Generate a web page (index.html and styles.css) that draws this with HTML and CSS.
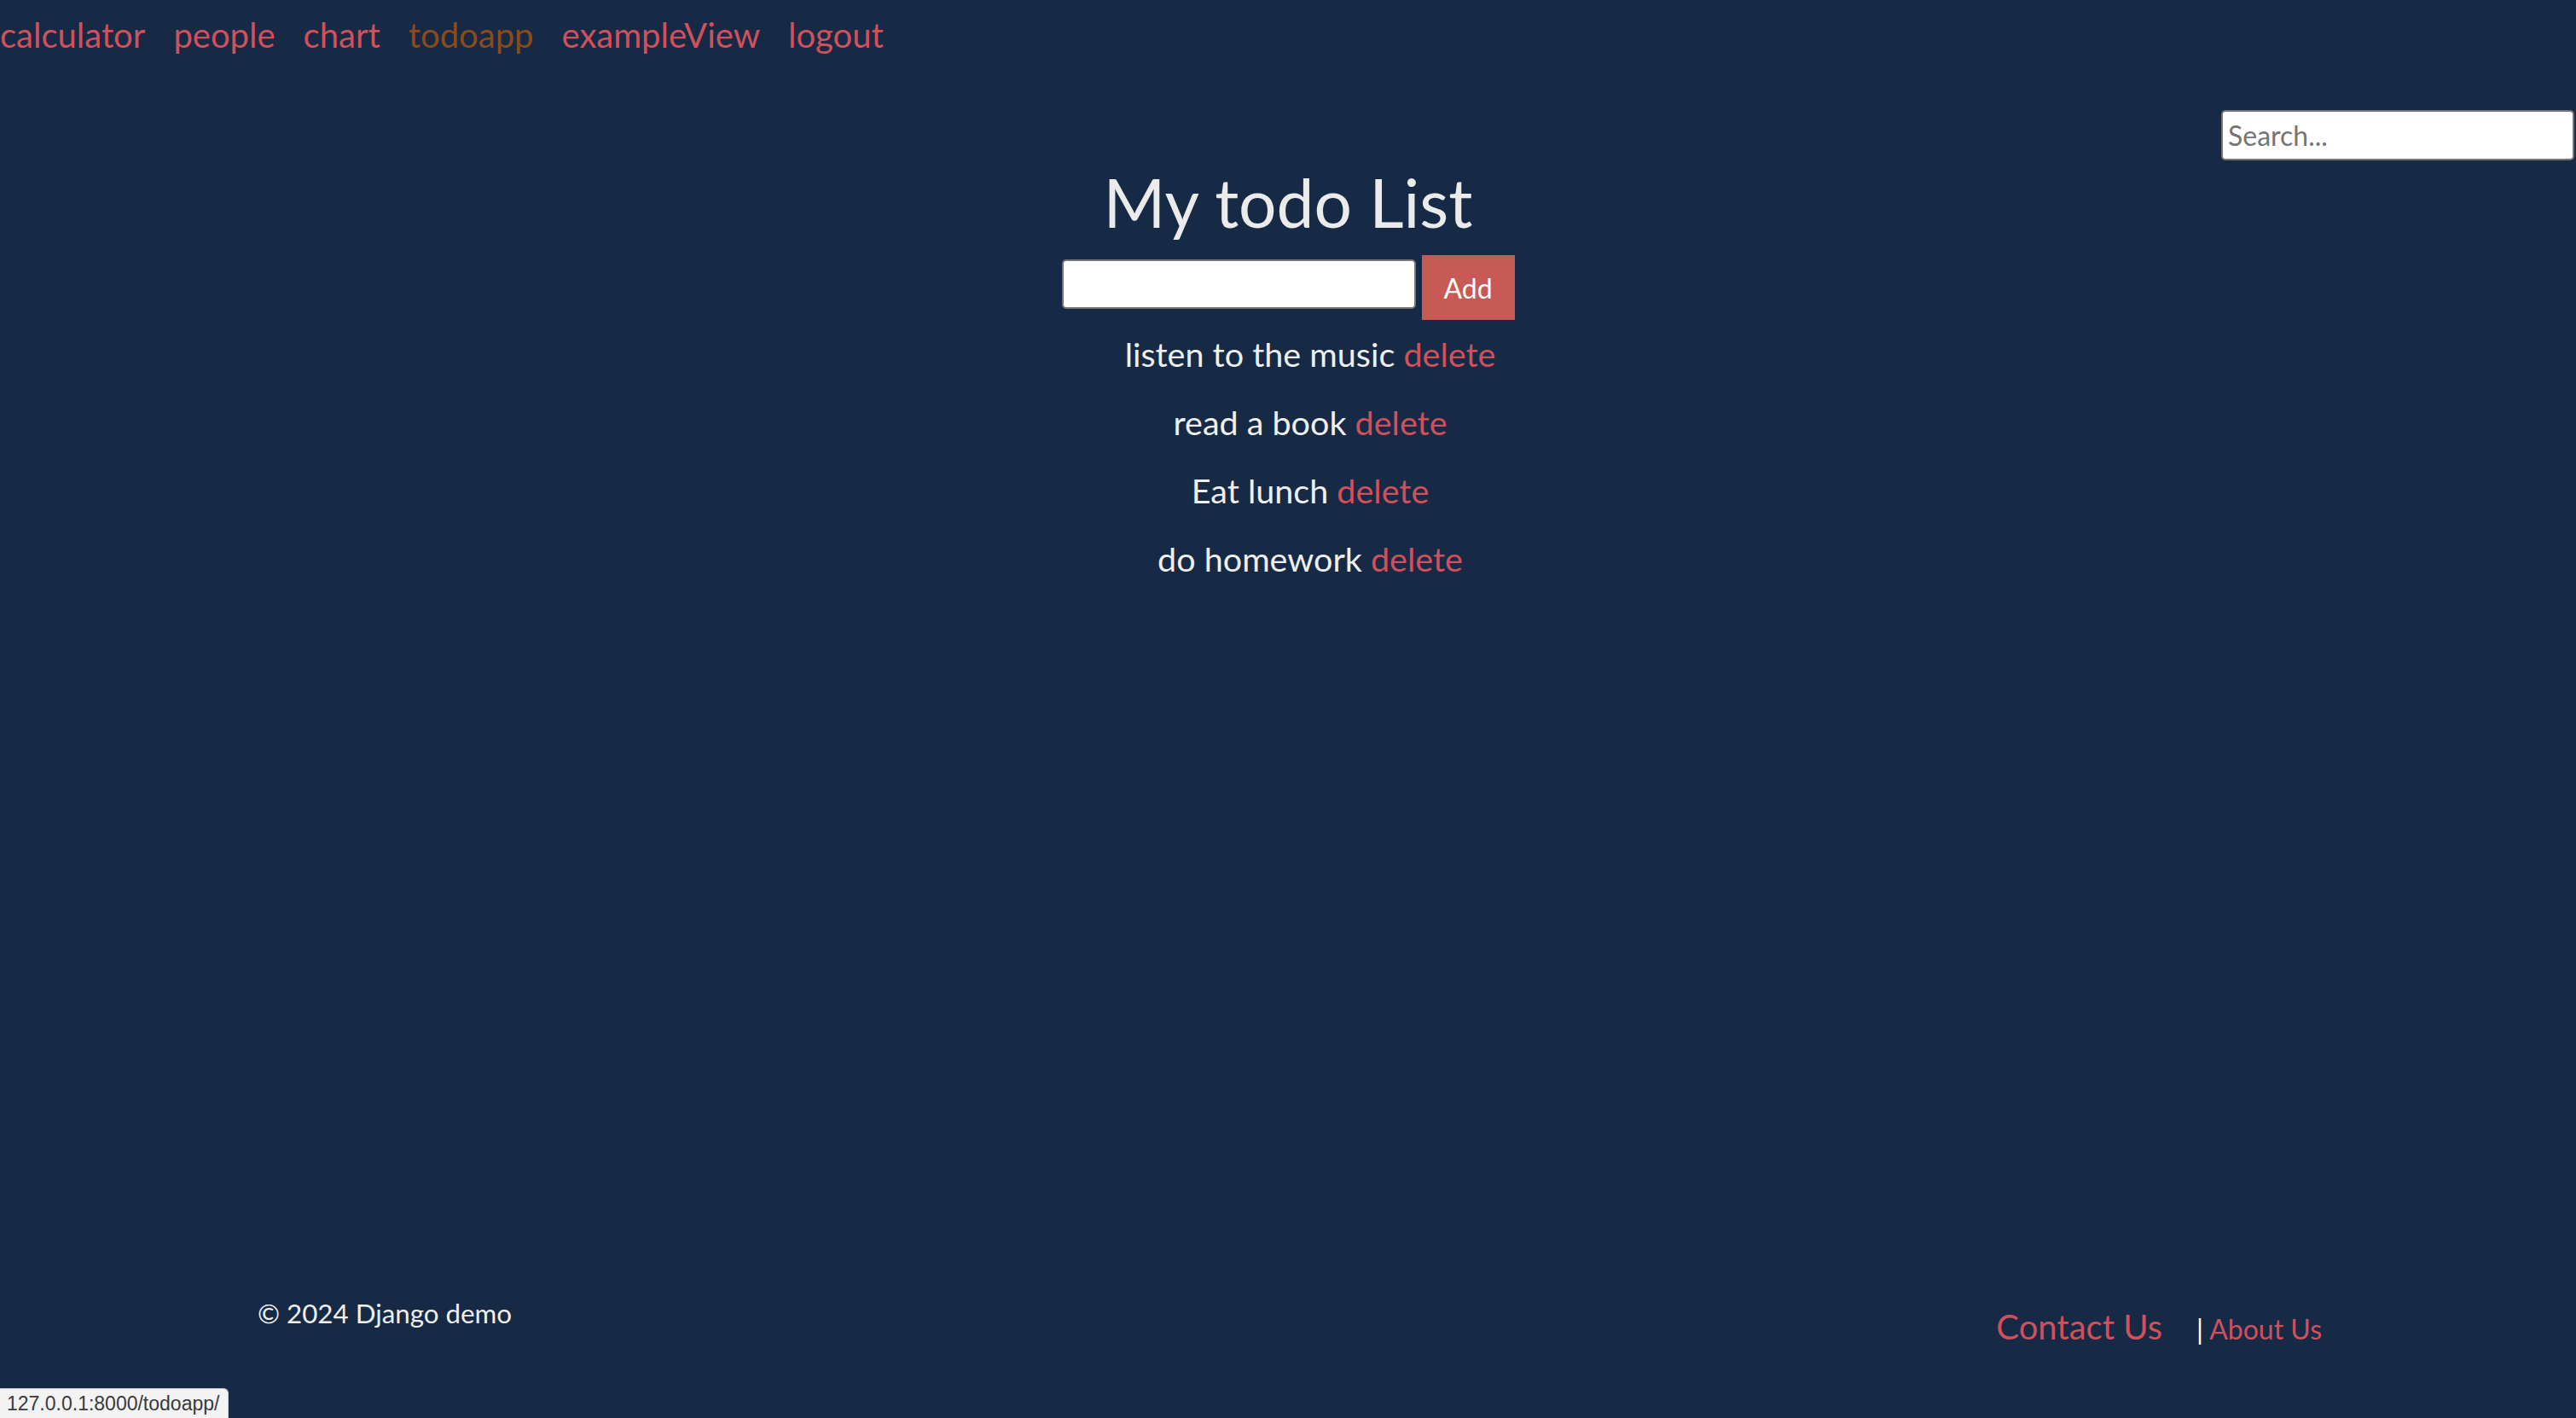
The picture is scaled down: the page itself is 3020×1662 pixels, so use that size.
FILE: index.html
```html
<!DOCTYPE html>
<html lang="en">
<head>
<meta charset="utf-8">
<title>My todo List</title>
<link rel="stylesheet" href="styles.css">
</head>
<body>
<nav class="topnav">
  <a class="nav-link" href="#">calculator</a>
  <a class="nav-link" href="#">people</a>
  <a class="nav-link" href="#">chart</a>
  <a class="nav-link active" href="#">todoapp</a>
  <a class="nav-link" href="#">exampleView</a>
  <a class="nav-link" href="#">logout</a>
</nav>
<div class="search-row">
  <input class="search" type="text" placeholder="Search...">
</div>
<main class="content">
  <h1 class="title">My todo List</h1>
  <form class="add-form">
    <input class="todo-input" type="text">
    <button class="add-btn" type="button">Add</button>
  </form>
  <ul class="todo-list">
    <li class="todo-item">listen to the music <a class="del" href="#">delete</a></li>
    <li class="todo-item">read a book <a class="del" href="#">delete</a></li>
    <li class="todo-item">Eat lunch <a class="del" href="#">delete</a></li>
    <li class="todo-item">do homework <a class="del" href="#">delete</a></li>
  </ul>
</main>
<footer class="footer">
  <p class="copy">© 2024 Django demo</p>
  <div class="footer-links">
    <a class="contact" href="#">Contact Us</a><span class="sep">| <a class="about" href="#">About Us</a></span>
  </div>
</footer>
<div class="status">127.0.0.1:8000/todoapp/</div>
</body>
</html>
```

FILE: styles.css
```css
html, body {
  margin: 0;
  padding: 0;
}
body {
  background: #162a45;
  font-family: "Lato", "Open Sans", sans-serif;
  color: #ececec;
  min-height: 100vh;
  display: flex;
  flex-direction: column;
  box-sizing: border-box;
}
a {
  text-decoration: none;
}
.topnav {
  display: flex;
  gap: 33px;
  padding-top: 17px;
  font-size: 40px;
  line-height: 48px;
}
.nav-link {
  color: #d0505c;
}
.nav-link.active {
  color: #8b4a1c;
}
.search-row {
  display: flex;
  justify-content: flex-end;
  padding-right: 2px;
  margin-top: 64px;
}
.search {
  box-sizing: border-box;
  width: 414px;
  height: 59px;
  border: 2px solid #767676;
  border-radius: 5px;
  padding: 0 6px;
  font-family: "Lato", sans-serif;
  font-size: 32px;
  background: #fff;
  outline: none;
}
.search::placeholder {
  color: #757575;
}
.content {
  display: flex;
  flex-direction: column;
  align-items: center;
}
.title {
  margin: 0;
  font-size: 78.5px;
  font-weight: 400;
  line-height: 98px;
  color: #ebebeb;
}
.add-form {
  display: flex;
  align-items: flex-start;
  gap: 7px;
  margin-top: 13px;
}
.todo-input {
  box-sizing: border-box;
  width: 415px;
  height: 58px;
  margin-top: 5px;
  border: 2px solid #767676;
  border-radius: 5px;
  background: #fff;
  font-size: 32px;
  outline: none;
}
.add-btn {
  box-sizing: border-box;
  width: 109px;
  height: 76px;
  border: none;
  background: #c85a55;
  color: #fff;
  font-family: "Lato", sans-serif;
  font-size: 32px;
  padding: 0;
}
.todo-list {
  list-style: none;
  margin: 16px 0 0;
  padding: 0 0 0 52px;
  text-align: center;
  display: flex;
  flex-direction: column;
  gap: 32px;
}
.todo-item {
  font-size: 39.5px;
  line-height: 48px;
  color: #efefef;
}
.del {
  color: #d0505c;
}
.footer {
  margin-top: auto;
  padding: 0 298px 79px 302px;
  display: flex;
  justify-content: space-between;
  align-items: flex-start;
}
.copy {
  margin: 0;
  font-size: 31.3px;
  line-height: 38px;
  color: #efefef;
}
.footer-links {
  padding-top: 10px;
  font-size: 40px;
  line-height: 50px;
}
.contact {
  color: #d0505c;
}
.sep {
  margin-left: 40px;
  font-size: 32px;
  color: #ffffff;
}
.about {
  color: #d0505c;
}
.status {
  position: absolute;
  left: 0;
  bottom: 0;
  box-sizing: border-box;
  width: 268px;
  height: 35px;
  padding: 4px 0 0 8px;
  background: #f3f3f3;
  border: 1px solid #c6c6c6;
  border-left: none;
  border-bottom: none;
  border-top-right-radius: 6px;
  font-family: "Liberation Sans", Arial, sans-serif;
  font-size: 23px;
  line-height: 26px;
  color: #3a3a3a;
}
```
